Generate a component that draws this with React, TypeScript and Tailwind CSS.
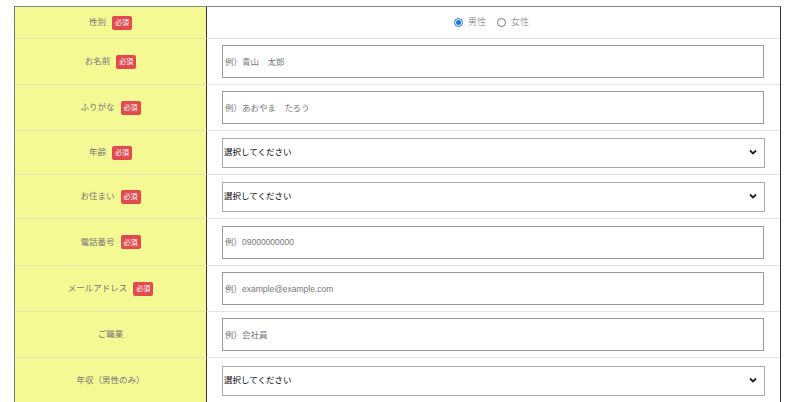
import React from 'react';

type Row = {
  label: string;
  required?: boolean;
  kind: 'radio' | 'input' | 'select';
  placeholder?: string;
  h: string;
};

const rows: Row[] = [
  { label: '性別', required: true, kind: 'radio', h: 'h-[32px]' },
  { label: 'お名前', required: true, kind: 'input', placeholder: '例）青山　太郎', h: 'h-[46px]' },
  { label: 'ふりがな', required: true, kind: 'input', placeholder: '例）あおやま　たろう', h: 'h-[46px]' },
  { label: '年齢', required: true, kind: 'select', h: 'h-[44px]' },
  { label: 'お住まい', required: true, kind: 'select', h: 'h-[44px]' },
  { label: '電話番号', required: true, kind: 'input', placeholder: '例）09000000000', h: 'h-[47px]' },
  { label: 'メールアドレス', required: true, kind: 'input', placeholder: '例）example@example.com', h: 'h-[46px]' },
  { label: 'ご職業', kind: 'input', placeholder: '例）会社員', h: 'h-[46px]' },
  { label: '年収（男性のみ）', kind: 'select', h: 'h-[46px]' },
  { label: '', kind: 'input', placeholder: '', h: 'h-[46px]' },
];

const sans = "font-['Liberation_Sans','Noto_Sans_CJK_JP',sans-serif]";
const serif = "font-['Liberation_Serif','Noto_Sans_CJK_JP',serif]";

function Badge() {
  return (
    <span className={`inline-flex items-center justify-center h-[14px] px-[3px] rounded-[2px] bg-[#e24a4f] text-white text-[7px] leading-none ${sans}`}>
      必須
    </span>
  );
}

function Radio({ checked, label }: { checked?: boolean; label: string }) {
  return (
    <label className="flex items-center gap-[5px]">
      <span
        className={
          checked
            ? 'w-[9px] h-[9px] rounded-full border border-[#1a73e8] bg-white flex items-center justify-center'
            : 'w-[9px] h-[9px] rounded-full border border-[#777] bg-white'
        }
      >
        {checked && <span className="w-[5px] h-[5px] rounded-full bg-[#1a73e8]" />}
      </span>
      <span className={`text-[9px] font-light text-[#777] ${serif}`}>{label}</span>
    </label>
  );
}

function Field({ row }: { row: Row }) {
  if (row.kind === 'radio') {
    return (
      <div className="flex items-center justify-center gap-[11px] h-full pr-[4px]">
        <Radio checked label="男性" />
        <Radio label="女性" />
      </div>
    );
  }
  if (row.kind === 'select') {
    return (
      <div className="flex items-center h-full pl-[15px] pr-[15px]">
        <div className="relative w-full">
          <select
            className={`w-full h-[30px] border border-[#aaa] bg-white appearance-none pl-[1px] text-[8.5px] text-black outline-none ${sans}`}
            defaultValue=""
          >
            <option value="">選択してください</option>
          </select>
          <svg
            className="absolute right-[8px] top-[12px] pointer-events-none"
            width="8"
            height="6"
            viewBox="0 0 8 6"
          >
            <path d="M1 1.5 L4 4.5 L7 1.5" fill="none" stroke="#222" strokeWidth="1.8" />
          </svg>
        </div>
      </div>
    );
  }
  return (
    <div className="flex items-center h-full pl-[15px] pr-[16px]">
      <input
        className={`w-full h-[33px] border border-[#999] bg-white px-[2px] text-[8.5px] text-black placeholder:text-[#777] outline-none ${sans}`}
        placeholder={row.placeholder}
      />
    </div>
  );
}

export default function App() {
  return (
    <div className="w-[800px] h-[402px] overflow-hidden bg-white pt-[6px] pl-[14px]">
      <div className="w-[767px] border-t border-l border-r border-t-[#888] border-l-[#777] border-r-[#333]">
        {rows.map((row, i) => (
          <div key={i} className={`grid grid-cols-[192px_1fr] ${row.h}`}>
            <div className="bg-[#f4f994] border-r border-[#333] border-b border-b-[#e2e6b4] flex items-center justify-center gap-[6px]">
              {row.label && (
                <span className={`text-[8.5px] text-[#777] ${serif}`}>{row.label}</span>
              )}
              {row.required && <Badge />}
            </div>
            <div className="border-b border-[#e3e3e3]">
              <Field row={row} />
            </div>
          </div>
        ))}
      </div>
    </div>
  );
}
